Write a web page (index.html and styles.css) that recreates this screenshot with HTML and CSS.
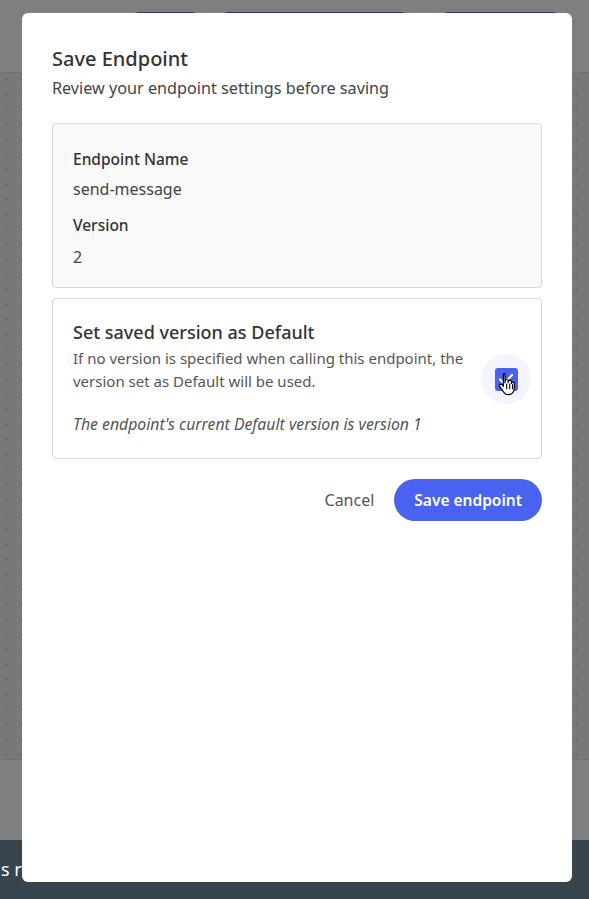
FILE: index.html
```html
<!DOCTYPE html>
<html>
<head>
<meta charset="utf-8">
<link rel="stylesheet" href="styles.css">
</head>
<body>
<div class="page">
  <header class="topbar">
    <span class="tb-btn b1"></span>
    <span class="tb-btn b2"></span>
    <span class="tb-btn b3"></span>
  </header>
  <main class="canvas"></main>
  <section class="lower"></section>
  <footer class="statusbar"><span class="status-text">s re</span></footer>
</div>

<div class="modal" role="dialog">
  <h1 class="modal-title">Save Endpoint</h1>
  <p class="modal-sub">Review your endpoint settings before saving</p>

  <div class="card card-info">
    <div class="label">Endpoint Name</div>
    <div class="value">send-message</div>
    <div class="label">Version</div>
    <div class="value">2</div>
  </div>

  <div class="card card-default">
    <div class="default-text">
      <div class="default-title">Set saved version as Default</div>
      <p class="default-desc">If no version is specified when calling this endpoint, the version set as Default will be used.</p>
      <p class="default-note">The endpoint's current Default version is version 1</p>
    </div>
    <div class="check-wrap">
      <span class="checkbox">
        <svg viewBox="0 0 22 22" width="22" height="22"><path d="M5 11.5 L9 15.5 L17 7" fill="none" stroke="#fff" stroke-width="2.2" stroke-linecap="round" stroke-linejoin="round"/></svg>
      </span>
      <svg class="cursor" viewBox="0 0 16 20" width="19" height="24">
        <path d="M4.5 1.5c.8 0 1.4.6 1.4 1.4V9l.1-1.6c0-.7.6-1.2 1.3-1.2s1.3.5 1.3 1.2V9l.1-1c0-.7.6-1.2 1.3-1.2s1.3.5 1.3 1.2v1.5c0-.7.6-1.1 1.2-1.1.7 0 1.2.5 1.2 1.2v4.2c0 2.9-2 5.2-4.8 5.2H8.6c-1.5 0-2.6-.6-3.5-1.8L1.6 12.4c-.5-.7-.4-1.5.2-1.9.6-.4 1.4-.3 1.8.3l.9 1.2V2.9c0-.8.6-1.4 1.3-1.4z" fill="#fff" stroke="#000" stroke-width="1" stroke-linejoin="round"/>
        <path d="M7.3 10v4M9.9 10v4M12.3 10.5v3.5" stroke="#000" stroke-width=".9" stroke-linecap="round"/>
      </svg>
    </div>
  </div>

  <div class="actions">
    <button class="btn-cancel">Cancel</button>
    <button class="btn-save">Save endpoint</button>
  </div>
</div>
</body>
</html>
```

FILE: styles.css
```css
* { box-sizing: border-box; }
html, body { margin: 0; padding: 0; }
body {
  width: 589px;
  height: 899px;
  overflow: hidden;
  font-family: "Noto Sans", "Liberation Sans", sans-serif;
  position: relative;
}
.page {
  display: flex;
  flex-direction: column;
  height: 899px;
}
.topbar {
  height: 73px;
  background: #7f7f7f;
  border-bottom: 1px solid #6f6f6f;
  display: flex;
  padding: 12px 0 0 135px;
  gap: 28px;
}
.tb-btn { display: block; height: 40px; border-radius: 4px; background: #25337c; }
.b1 { width: 61px; }
.b2 { width: 181px; }
.b3 { width: 113px; margin-left: 11px; }
.canvas {
  height: 687px;
  background-color: #787878;
  background-image: radial-gradient(circle, #666 0.9px, transparent 1.3px);
  background-size: 15px 15px;
  background-position: -1px -1px;
  border-bottom: 1px solid #6f6f6f;
}
.lower {
  flex: 1;
  background: #7f7f7f;
}
.statusbar {
  height: 59px;
  background: #37454f;
  color: #fff;
  font-size: 18px;
  padding-top: 17px;
}
.status-text { display: block; margin-left: 1px; }

.modal {
  position: absolute;
  left: 22px;
  top: 13px;
  width: 550px;
  height: 869px;
  background: #fff;
  border-radius: 6px;
  padding: 32px 30px 0 30px;
  color: #333;
}
.modal-title {
  margin: 0;
  font-size: 20px;
  font-weight: 500;
  line-height: 28px;
  color: #333;
}
.modal-sub {
  margin: 4px 0 0;
  font-size: 16.2px;
  line-height: 22px;
  color: #444;
}
.card {
  border: 1px solid #d6d8db;
  border-radius: 4px;
}
.card-info {
  margin-top: 24px;
  background: #f9f9f9;
  padding: 22px 20px 16px;
  height: 165px;
}
.label {
  font-size: 15.5px;
  font-weight: 500;
  line-height: 26px;
  color: #333;
}
.value {
  font-size: 16px;
  line-height: 26px;
  color: #444;
  margin: 4px 0 10px;
}
.value:last-child { margin-top: 6px; }
.card-default {
  margin-top: 10px;
  height: 161px;
  padding: 20px 20px 0;
  display: flex;
  align-items: flex-start;
}
.default-text { flex: 1; }
.default-title {
  font-size: 18px;
  font-weight: 500;
  line-height: 27px;
  color: #333;
}
.default-desc {
  margin: 1px 0 0;
  font-size: 15px;
  line-height: 23px;
  color: #555;
  max-width: 400px;
}
.default-note {
  margin: 20px 0 0;
  font-size: 15.8px;
  line-height: 23px;
  font-style: italic;
  color: #555;
}
.check-wrap {
  position: relative;
  flex: none;
  width: 50px;
  height: 50px;
  border-radius: 50%;
  background: #f3f4fd;
  margin-top: 35px;
  margin-right: -10px;
  display: flex;
  align-items: center;
  justify-content: center;
}
.checkbox {
  width: 23px;
  height: 23px;
  border-radius: 3px;
  background: #4a62f0;
  display: flex;
  align-items: center;
  justify-content: center;
}
.cursor {
  position: absolute;
  left: 17px;
  top: 18px;
}
.actions {
  margin-top: 20px;
  display: flex;
  justify-content: flex-end;
  align-items: center;
  gap: 20px;
}
.btn-cancel {
  border: 0;
  background: none;
  font-family: inherit;
  font-size: 16px;
  color: #555;
  padding: 0;
  cursor: pointer;
}
.btn-save {
  border: 0;
  background: #4a62f0;
  color: #fff;
  font-family: inherit;
  font-size: 15.5px;
  font-weight: 600;
  height: 42px;
  padding: 0 20px;
  border-radius: 21px;
  cursor: pointer;
}
```
